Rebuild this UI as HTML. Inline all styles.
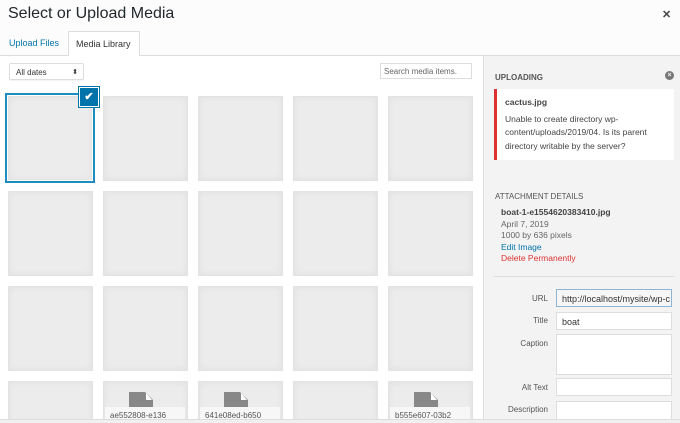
<!DOCTYPE html><html style="overflow:hidden"><head><style>
html,body{margin:0;width:680px;height:423px;overflow:hidden}
body{font-family:"Liberation Sans",sans-serif;background:#fff;position:relative}
#w{position:absolute;left:0;top:0;width:680px;height:420px;overflow:hidden}
.a{position:absolute}
.t{position:absolute;width:83px;height:83px;background:#ececec;border:1px solid #e2e2e2;box-shadow:inset 0 0 8px rgba(0,0,0,.05)}
.lab{position:absolute;font-size:8px;color:#555;text-align:right;width:50px}
.in{position:absolute;left:556px;width:116px;height:18px;border:1px solid #ddd;background:#fff;font-size:9px;color:#333;line-height:18px;padding-left:5px;box-sizing:border-box;overflow:hidden;white-space:nowrap}
</style></head><body>
<div id="w">
<div class="a" style="left:0;top:0;width:680px;height:55px;background:#fcfcfc;border-bottom:1px solid #ddd"></div>
<div class="a" style="left:8px;top:5px;font-size:16px;color:#23282d">Select or Upload Media</div>
<div class="a" style="left:662px;top:8px;font-size:11px;font-weight:bold;color:#444">✕</div>
<div class="a" style="left:9px;top:38px;font-size:9px;color:#0073aa">Upload Files</div>
<div class="a" style="left:68px;top:31px;width:72px;height:25px;background:#fff;border:1px solid #ddd;border-bottom:none;box-sizing:border-box;font-size:9px;color:#333;padding:7px 0 0 7px">Media Library</div>
<div class="a" style="left:9px;top:63px;width:75px;height:17px;border:1px solid #ddd;border-radius:2px;box-shadow:0 1px 1px rgba(0,0,0,.05);font-size:8px;color:#333;line-height:17px;padding-left:6px;box-sizing:border-box">All dates<span style="position:absolute;right:5px;font-size:7px">⬍</span></div>
<div class="a" style="left:380px;top:63px;width:92px;height:16px;border:1px solid #ddd;font-size:8px;color:#666;line-height:16px;padding-left:3px;box-sizing:border-box">Search media items.</div>
<div class="a" style="left:483px;top:56px;width:197px;height:367px;background:#f3f3f3;border-left:1px solid #ddd"></div>
<div class="a" style="left:495px;top:73px;font-size:8px;font-weight:bold;color:#555">UPLOADING</div>
<div class="a" style="left:665px;top:71px;width:9px;height:9px;border-radius:50%;background:#777;color:#f3f3f3;font-size:7px;line-height:9px;text-align:center;font-weight:bold">×</div>
<div class="a" style="left:494px;top:89px;width:180px;height:71px;background:#fff;border-left:3px solid #dc3232;box-sizing:border-box;padding:7px 0 0 8px;font-size:8.5px;color:#444;line-height:13.5px"><div style="font-weight:bold;margin-bottom:3px">cactus.jpg</div>Unable to create directory wp-<br>content/uploads/2019/04. Is its parent<br>directory writable by the server?</div>
<div class="a" style="left:495px;top:192px;font-size:8px;color:#555">ATTACHMENT DETAILS</div>
<div class="a" style="left:501px;top:207px;font-size:8.5px;color:#444;line-height:11.5px"><b>boat-1-e1554620383410.jpg</b><br><span style="color:#666">April 7, 2019<br>1000 by 636 pixels</span><br><span style="color:#0073aa">Edit Image</span><br><span style="color:#dc3232">Delete Permanently</span></div>
<div class="a" style="left:494px;top:276px;width:180px;height:1px;background:#ddd"></div>
<div class="lab" style="left:498px;top:294px">URL</div><div class="in" style="top:289px;background:#f6f6f6;border-color:#8cb4d4">http://localhost/mysite/wp-c</div>
<div class="lab" style="left:498px;top:316px">Title</div><div class="in" style="top:312px">boat</div>
<div class="lab" style="left:498px;top:339px">Caption</div><div class="in" style="top:334px;height:41px"></div>
<div class="lab" style="left:498px;top:383px">Alt Text</div><div class="in" style="top:378px"></div>
<div class="lab" style="left:498px;top:405px">Description</div><div class="in" style="top:401px;height:30px"></div>
<div id="g"></div>
<script>
var s='';for(var r=0;r<4;r++)for(var c=0;c<5;c++){s+='<div class="t" style="left:'+(8+c*95)+'px;top:'+(96+r*95)+'px"></div>';}
document.getElementById('g').innerHTML=s;
</script>
<div class="a" style="left:5px;top:93px;width:90px;height:90px;border:2px solid #1e8cbe;box-sizing:border-box;box-shadow:inset 0 0 0 1px #fff"></div>
<div class="a" style="left:80px;top:88px;width:18px;height:18px;background:#0073aa;box-shadow:0 0 0 1px #fff,0 0 0 2px #0073aa;color:#fff;font-size:11px;line-height:18px;text-align:center;font-weight:bold">✔</div>
<svg class="a" style="left:0;top:390px" width="480" height="30">
<g fill="#888"><path d="M129 2h16l8 8v20h-24z"/><path d="M224 2h16l8 8v20h-24z"/><path d="M414 2h16l8 8v20h-24z"/></g>
<g fill="#fff"><path d="M146 3l6 7h-6z"/><path d="M241 3l6 7h-6z"/><path d="M431 3l6 7h-6z"/></g>
<rect x="105" y="17" width="80" height="13" fill="#f7f7f7"/><rect x="200" y="17" width="80" height="13" fill="#f7f7f7"/><rect x="390" y="17" width="80" height="13" fill="#f7f7f7"/>
<g font-size="8" fill="#555" font-family="Liberation Sans"><text x="110" y="28">ae552808-e136</text><text x="205" y="28">641e08ed-b650</text><text x="395" y="28">b555e607-03b2</text></g>
</svg>
</div>
<div class="a" style="left:0;top:419px;width:680px;height:4px;background:#f0f0f0;border-top:1px solid #ddd"></div>
</body></html>
